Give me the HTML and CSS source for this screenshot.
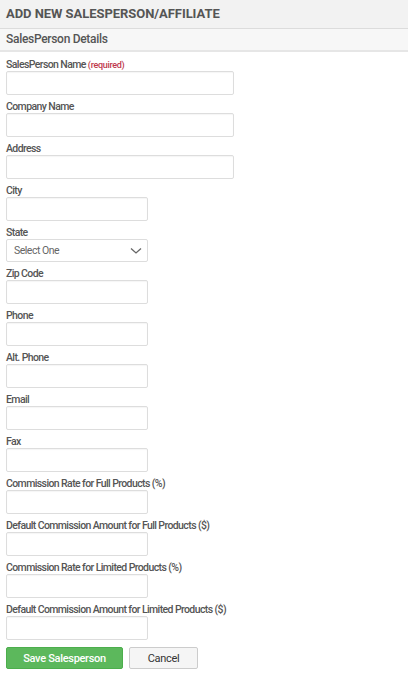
FILE: index.html
```html
<!doctype html>
<html>
  <head>
    <title>Add New Salesperson</title>
    <link rel="stylesheet" href="styles.css">
  </head>
  <body>
    <h1 class="page_title">Add New Salesperson/Affiliate</h1>
    <h2 class="section_title">SalesPerson Details</h2>
    <form class="form">
      <div class="field">
        <label for="name">SalesPerson Name <span class="required">(required)</span></label>
        <input type="text" id="name" class="wide">
      </div>
      <div class="field">
        <label for="company">Company Name</label>
        <input type="text" id="company" class="wide">
      </div>
      <div class="field">
        <label for="address">Address</label>
        <input type="text" id="address" class="wide">
      </div>
      <div class="field">
        <label for="city">City</label>
        <input type="text" id="city">
      </div>
      <div class="field">
        <label for="state">State</label>
        <div class="select_box">
          <select id="state">
            <option>Select One</option>
          </select>
          <svg class="chevron" width="12" height="8" viewBox="0 0 12 8"><path d="M1 1.5l5 4.5 5-4.5" fill="none" stroke="#666" stroke-width="1.3"/></svg>
        </div>
      </div>
      <div class="field">
        <label for="zip">Zip Code</label>
        <input type="text" id="zip">
      </div>
      <div class="field">
        <label for="phone">Phone</label>
        <input type="text" id="phone">
      </div>
      <div class="field">
        <label for="alt_phone">Alt. Phone</label>
        <input type="text" id="alt_phone">
      </div>
      <div class="field">
        <label for="email">Email</label>
        <input type="text" id="email">
      </div>
      <div class="field">
        <label for="fax">Fax</label>
        <input type="text" id="fax">
      </div>
      <div class="field">
        <label for="rate_full">Commission Rate for Full Products (%)</label>
        <input type="text" id="rate_full">
      </div>
      <div class="field">
        <label for="amount_full">Default Commission Amount for Full Products ($)</label>
        <input type="text" id="amount_full">
      </div>
      <div class="field">
        <label for="rate_limited">Commission Rate for Limited Products (%)</label>
        <input type="text" id="rate_limited">
      </div>
      <div class="field">
        <label for="amount_limited">Default Commission Amount for Limited Products ($)</label>
        <input type="text" id="amount_limited">
      </div>
      <div class="buttons">
        <button type="button" class="save">Save Salesperson</button>
        <button type="button" class="cancel">Cancel</button>
      </div>
    </form>
  </body>
</html>
```

FILE: styles.css
```css
body {
  margin: 0;
  font-family: Roboto, "Liberation Sans", sans-serif;
  color: #555;
  background-color: #fff;
}

.page_title {
  margin: 0;
  height: 28px;
  line-height: 28px;
  padding: 0 6px;
  font-size: 13px;
  font-weight: bold;
  text-transform: uppercase;
  letter-spacing: -0.05px;
  background-color: #f2f2f2;
  border-bottom: 1px solid #dcdcdc;
}

.section_title {
  margin: 0;
  height: 21px;
  line-height: 21px;
  padding: 0 6px;
  font-size: 12px;
  font-weight: 500;
  letter-spacing: -0.3px;
  background-color: #f7f7f7;
  border-bottom: 2px solid #e6e6e6;
}

.form {
  padding: 7px 6px 0;
}

.field {
  display: flex;
  flex-direction: column;
  align-items: flex-start;
  margin-bottom: 6px;
}

.field label {
  font-size: 10.5px;
  font-weight: 500;
  line-height: 12px;
  letter-spacing: -0.6px;
}

.required {
  color: #c0394d;
  font-size: 9px;
  letter-spacing: -0.3px;
}

input[type="text"] {
  box-sizing: border-box;
  width: 142px;
  height: 24px;
  margin: 0;
  border: 1px solid #ddd;
  border-radius: 2px;
  box-shadow: inset 0 1px 1px rgba(0, 0, 0, 0.04);
  background-color: #fff;
}

input.wide {
  width: 228px;
}

.select_box {
  position: relative;
  width: 142px;
  height: 23px;
}

.select_box select {
  box-sizing: border-box;
  width: 100%;
  height: 23px;
  margin: 0;
  padding: 0 7px;
  border: 1px solid #ddd;
  border-radius: 2px;
  background-color: #fff;
  color: #666;
  font-family: Roboto, "Liberation Sans", sans-serif;
  font-size: 10.5px;
  letter-spacing: -0.5px;
  appearance: none;
  -webkit-appearance: none;
}

.chevron {
  position: absolute;
  top: 8px;
  right: 6px;
}

.buttons {
  display: flex;
  gap: 6px;
  padding-top: 1px;
}

.buttons button {
  box-sizing: border-box;
  height: 22px;
  border-radius: 2px;
  font-family: Roboto, "Liberation Sans", sans-serif;
  font-size: 11px;
  letter-spacing: -0.3px;
  cursor: pointer;
}

.save {
  width: 117px;
  border: 1px solid #4cae4c;
  background-color: #5cb85c;
  color: #fff;
  font-weight: 500;
}

.cancel {
  width: 69px;
  border: 1px solid #ccc;
  background-color: #f5f5f5;
  color: #333;
}
```
